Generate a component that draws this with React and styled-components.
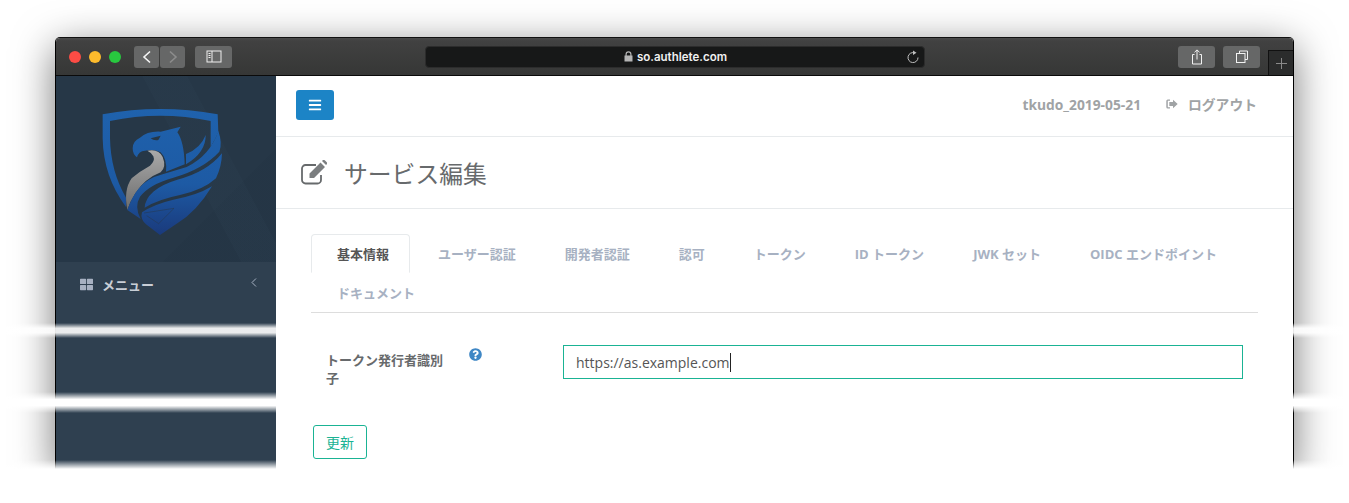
import React from "react";
import styled, { createGlobalStyle } from "styled-components";
import { FaBars, FaThLarge, FaQuestionCircle } from "react-icons/fa";

const Global = createGlobalStyle`
  html, body { margin: 0; padding: 0; background: #fff; }
  body { font-family: "Open Sans", "Noto Sans CJK JP", sans-serif; }
  * { box-sizing: border-box; }
`;
const JP = `"Open Sans", "Noto Sans CJK JP", sans-serif`;

const Page = styled.div`
  position: relative;
  width: 1349px;
  height: 503px;
  overflow: hidden;
  padding: 37px 55px 0;
  background: #fff;
`;
const Window = styled.div`
  width: 1239px;
  height: 432px;
  border: 1px solid #000;
  border-top-color: #111;
  border-bottom: 0;
  border-radius: 5px 5px 0 0;
  box-shadow: 0 10px 40px rgba(0, 0, 0, 0.55);
  display: flex;
  flex-direction: column;
  overflow: hidden;
  background: #fff;
`;
const TitleBar = styled.div`
  height: 38px;
  flex: none;
  position: relative;
  display: flex;
  align-items: center;
  padding: 0 13px;
  background: linear-gradient(#4a4a4a 0, #414141 3px, #363736 100%);
  border-bottom: 1px solid #0a0a0a;
`;
const Lights = styled.div`
  display: flex;
  gap: 8px;
  margin-right: 13px;
`;
const Light = styled.span`
  width: 12px;
  height: 12px;
  border-radius: 50%;
  background: ${(p) => p.$c};
`;
const NavGroup = styled.div`
  display: flex;
  gap: 1px;
  margin-right: 10px;
`;
const ChromeButton = styled.div`
  width: ${(p) => p.$w}px;
  height: 22px;
  border-radius: 3px;
  background: #666767;
  display: flex;
  align-items: center;
  justify-content: center;
`;
const UrlBar = styled.div`
  width: 500px;
  height: 22px;
  margin-left: 193px;
  border-radius: 4px;
  background: #171818;
  border: 1px solid #2c2c2c;
  display: flex;
  align-items: center;
  justify-content: center;
  gap: 3px;
  position: relative;
  color: #f0f0f0;
  font: 600 11.5px "Inter", "Liberation Sans", sans-serif;
`;
const Reload = styled.svg`
  position: absolute;
  right: 4px;
  top: 3px;
`;
const RightTools = styled.div`
  margin-left: 253px;
  display: flex;
  gap: 8px;
`;
const NewTab = styled.div`
  position: absolute;
  right: 0;
  bottom: 0;
  width: 25px;
  height: 25px;
  background: #2b2c2c;
  border-left: 1px solid #111;
  border-top: 1px solid #111;
  display: flex;
  align-items: center;
  justify-content: center;
`;
const Body = styled.div`
  flex: 1;
  display: flex;
  min-height: 0;
`;
const Sidebar = styled.aside`
  width: 220px;
  flex: none;
  background: #2f4050;
  display: flex;
  flex-direction: column;
`;
const LogoArea = styled.div`
  height: 186px;
  display: flex;
  justify-content: center;
  padding: 19px 2px 0 0;
  background:
    linear-gradient(62deg, transparent 58%, rgba(60, 85, 105, 0.08) 58.2%, rgba(60, 85, 105, 0.08) 72%, transparent 72.2%),
    linear-gradient(135deg, transparent 72%, rgba(20, 35, 50, 0.08) 72.2%),
    #263747;
`;
const MenuHead = styled.div`
  height: 46px;
  display: flex;
  align-items: center;
  padding: 0 19px 2px 24px;
  color: #c8ced6;
  font: 700 13px ${JP};
`;
const MenuLabel = styled.span`
  margin-left: 9px;
  flex: 1;
`;
const MenuCaret = styled.svg`
  margin-top: -4px;
`;
const Main = styled.main`
  flex: 1;
  min-width: 0;
  background: #fff;
`;
const TopNav = styled.div`
  height: 61px;
  border-bottom: 1px solid #e7eaec;
  display: flex;
  align-items: center;
  padding: 0 36px 2px 20px;
`;
const MenuButton = styled.button`
  width: 38px;
  height: 30px;
  border: 0;
  padding: 0;
  border-radius: 3px;
  background: #1c84c6;
  color: #fff;
  display: flex;
  align-items: center;
  justify-content: center;
`;
const NavUser = styled.span`
  margin-left: auto;
  margin-bottom: 2px;
  color: #a0a3a5;
  font: 700 13.8px ${JP};
`;
const Logout = styled.span`
  margin: 0 0 2px 25px;
  color: #a0a3a5;
  font: 700 13.8px ${JP};
  display: flex;
  align-items: center;
  gap: 10px;
`;
const TitleRow = styled.div`
  height: 72px;
  border-bottom: 1px solid #e7eaec;
  display: flex;
  align-items: center;
  padding: 0 0 0 25px;
  gap: 17px;
  color: #676a6c;
`;
const Title = styled.h2`
  margin: 0;
  font: 400 23.8px ${JP};
  color: #676a6c;
`;
const Content = styled.div`
  padding: 25px 35px 0;
`;
const Tabs = styled.div`
  display: flex;
  flex-wrap: wrap;
  border-bottom: 1px solid #ddd;
  height: 79px;
  align-content: flex-start;
`;
const Tab = styled.div`
  height: 39px;
  padding: 0 20px 0 25px;
  margin-right: 2px;
  display: flex;
  align-items: center;
  font: 700 13px ${JP};
  color: ${(p) => (p.$active ? "#555" : "#a7b1c2")};
  border: 1px solid ${(p) => (p.$active ? "#e7eaec" : "transparent")};
  border-bottom: 1px solid ${(p) => (p.$active ? "#fff" : "transparent")};
  border-radius: 4px 4px 0 0;
`;
const FieldRow = styled.div`
  display: flex;
  align-items: flex-start;
  margin-top: 32px;
  padding-left: 15px;
`;
const FieldLabel = styled.label`
  width: 120px;
  margin-top: 6px;
  font: 700 13px/18px ${JP};
  color: #676a6c;
`;
const HelpIcon = styled.span`
  width: 117px;
  padding-left: 23px;
  margin-top: 3px;
  color: #3f87c5;
  line-height: 0;
`;
const Field = styled.div`
  width: 680px;
  height: 34px;
  border: 1px solid #1ab394;
  padding: 0 12px;
  display: flex;
  align-items: center;
  font: 400 14px "Open Sans", sans-serif;
  color: #555;
`;
const Caret = styled.span`
  width: 1px;
  height: 19px;
  background: #222;
`;
const SubmitButton = styled.button`
  display: block;
  margin: 38px 0 0 2px;
  width: 54px;
  height: 34px;
  padding: 0;
  border: 1px solid #1ab394;
  border-radius: 3px;
  background: #fff;
  color: #1ab394;
  font: 400 14px ${JP};
`;
const Tear = styled.div`
  position: absolute;
  left: 0;
  right: 0;
  top: ${(p) => p.$top}px;
  height: ${(p) => p.$h}px;
  background: linear-gradient(rgba(255, 255, 255, 0) 0, ${(p) => p.$c} 35%, ${(p) => p.$c} 65%, rgba(255, 255, 255, 0) 100%);
`;
const BottomFade = styled.div`
  position: absolute;
  left: 0;
  right: 0;
  top: 460px;
  bottom: 0;
  background: linear-gradient(rgba(255, 255, 255, 0) 0, #fff 9px);
`;

const BG = "#263747";
const Logo = () => (
  <svg width="150" height="150" viewBox="0 0 450 450" aria-hidden="true">
    <defs>
      <linearGradient id="b" gradientUnits="userSpaceOnUse" x1="0" y1="40" x2="0" y2="420">
        <stop offset="0" stopColor="#1f62ad" />
        <stop offset="0.6" stopColor="#1d5aa4" />
        <stop offset="1" stopColor="#1a3a7c" />
      </linearGradient>
      <linearGradient id="g" x1="0" y1="0" x2="0" y2="1">
        <stop offset="0" stopColor="#aaa" />
        <stop offset="1" stopColor="#6c6c6c" />
      </linearGradient>
    </defs>
    <path fill="url(#b)" d="M38 58Q210 26 383 58L385 112Q375 135 362 155V78Q210 46 60 78V130Q62 230 108 308L108 336Q40 245 38 130Z" />
    <path fill="url(#b)" d="M128 160Q128 138 150 128Q172 108 212 110L272 95 262 112Q282 140 284 208L228 230Q232 192 212 172Q190 162 165 167Q146 168 141 187Q128 178 128 160Z" />
    <path fill={BG} d="M182 130L212 122 205 135Q192 138 182 130Z" />
    <path fill="url(#b)" d="M288 177Q332 160 347 120Q348 172 288 208Z" />
    <path fill="url(#g)" d="M172 167Q206 160 218 186Q230 216 212 232Q165 250 136 295Q120 320 112 345Q100 285 125 250Q150 228 180 212Q196 198 190 184Q184 172 172 167Z" />
    <path fill="url(#b)" d="M385 108Q398 145 388 170Q340 222 250 248Q178 268 150 305Q132 335 152 372L112 345Q126 305 145 282Q170 250 218 238L290 216Q360 182 385 108Z" />
    <path fill="url(#b)" d="M396 175Q395 215 378 250Q340 285 270 300Q205 313 164 338Q165 312 190 290Q215 268 262 254Q350 232 396 175Z" />
    <path fill="url(#b)" d="M366 274Q320 350 262 385L210 420 168 388Q150 372 156 352Q190 328 250 314Q320 302 366 274Z" />
    <path fill="none" stroke={BG} strokeOpacity="0.7" strokeWidth="2" d="M162 354L252 340 206 386 170 362" />
  </svg>
);

const EditIcon = () => (
  <svg width="26" height="25" viewBox="0 0 26 25" aria-hidden="true">
    <path fill="none" stroke="#676a6c" strokeWidth="1.800" d="M20 15v5a3.500 3.500 0 0 1-3.500 3.500H4.500A3.500 3.500 0 0 1 1 20V8.500A3.500 3.500 0 0 1 4.500 5H15" />
    <path fill="#7b7e80" d="M8.500 13.500L19.500 2.500 24 7 13 18H8.500ZM21 1l1-1q1-.5 2 .5l1.500 1.500q1 1 .5 2l-1 1Z" />
  </svg>
);
const Share = () => (
  <svg width="14" height="16" viewBox="0 0 14 16" fill="none" stroke="#f2f2f2" strokeWidth="1">
    <path d="M4.500 5.500H2.500V15H11.500V5.500H9.500M7 10.500V1M4.500 3.300L7 .9 9.500 3.300" />
  </svg>
);
const Copy = () => (
  <svg width="14" height="14" viewBox="0 0 14 14" fill="none" stroke="#f2f2f2" strokeWidth="1">
    <path d="M4.500 3.500V1H12.500V9.500H10" />
    <rect x="1.500" y="3.500" width="8.500" height="9" />
  </svg>
);
const SidebarIcon = () => (
  <svg width="16" height="13" viewBox="0 0 16 13" fill="none" stroke="#f0f0f0" strokeWidth="1">
    <rect x="1" y="1" width="14" height="11" />
    <path d="M6 1V12M2.500 3.500H4.500M2.500 5.500H4.500M2.500 7.500H4.500" />
  </svg>
);
const Chevron = ({ dir, c }) => (
  <svg width="10" height="14" viewBox="0 0 10 14" fill="none" stroke={c} strokeWidth="1.6">
    <path d={dir === "l" ? "M8 1.500L2 7l6 5.500" : "M2 1.500L8 7l-6 5.500"} />
  </svg>
);
const LogoutIcon = () => (
  <svg width="12" height="10" viewBox="0 0 12 10" fill="#a0a3a5">
    <path d="M4 .5H1.800Q.3 .5 .3 2V8Q.3 9.500 1.800 9.500H4V8.300H1.800V1.700H4ZM7 .7L11.700 5 7 9.300V7H3.300V3H7Z" />
  </svg>
);

const tabs = ["ユーザー認証", "開発者認証", "認可", "トークン", "ID トークン", "JWK セット", "OIDC エンドポイント", "ドキュメント"];

export default function App() {
  return (
    <Page>
      <Global />
      <Window>
        <TitleBar>
          <Lights>
            <Light $c="#fc4c45" />
            <Light $c="#fdbb2c" />
            <Light $c="#28c83f" />
          </Lights>
          <NavGroup>
            <ChromeButton $w={25}><Chevron dir="l" c="#f4f4f4" /></ChromeButton>
            <ChromeButton $w={25}><Chevron dir="r" c="#8c8c8c" /></ChromeButton>
          </NavGroup>
          <ChromeButton $w={37}><SidebarIcon /></ChromeButton>
          <UrlBar>
            <svg width="11" height="11" viewBox="0 0 11 11" fill="#b5b5b5">
              <path d="M2.500 4.500V3.200a3 3 0 0 1 6 0V4.500H9.500V10.500H1.500V4.500ZM3.700 4.500H7.300V3.200a1.800 1.800 0 0 0-3.600 0Z" />
            </svg>
            so.authlete.com
            <Reload width="14" height="14" viewBox="0 0 14 14" fill="none" stroke="#c0c0c0" strokeWidth="1">
              <path d="M8.500 2.800A5 5 0 1 0 12 7.500" />
              <path d="M7 .5L10.500 2.800 7 5Z" fill="#c0c0c0" stroke="none" />
            </Reload>
          </UrlBar>
          <RightTools>
            <ChromeButton $w={37}><Share /></ChromeButton>
            <ChromeButton $w={37}><Copy /></ChromeButton>
          </RightTools>
          <NewTab>
            <svg width="11" height="11" viewBox="0 0 11 11" stroke="#8a8a8a" strokeWidth="1"><path d="M5.500 0V11M0 5.500H11" /></svg>
          </NewTab>
        </TitleBar>
        <Body>
          <Sidebar>
            <LogoArea><Logo /></LogoArea>
            <MenuHead>
              <FaThLarge size={13} color="#a7b1c2" />
              <MenuLabel>メニュー</MenuLabel>
              <MenuCaret width="6" height="9" viewBox="0 0 6 9" fill="none" stroke="#a7b1c2" strokeWidth="1"><path d="M5 .5L1 4.500l4 4" /></MenuCaret>
            </MenuHead>
          </Sidebar>
          <Main>
            <TopNav>
              <MenuButton><FaBars size={14} /></MenuButton>
              <NavUser>tkudo_2019-05-21</NavUser>
              <Logout><LogoutIcon />ログアウト</Logout>
            </TopNav>
            <TitleRow>
              <EditIcon />
              <Title>サービス編集</Title>
            </TitleRow>
            <Content>
              <Tabs>
                <Tab $active>基本情報</Tab>
                {tabs.map((t) => <Tab key={t}>{t}</Tab>)}
              </Tabs>
              <FieldRow>
                <FieldLabel>トークン発行者識別子</FieldLabel>
                <HelpIcon><FaQuestionCircle size={13} /></HelpIcon>
                <Field>https://as.example.com<Caret /></Field>
              </FieldRow>
              <SubmitButton>更新</SubmitButton>
            </Content>
          </Main>
        </Body>
      </Window>
      <Tear $top={323} $h={15} $c="rgba(255,255,255,0.9)" />
      <Tear $top={392} $h={21} $c="#ffffff" />
      <BottomFade />
    </Page>
  );
}
